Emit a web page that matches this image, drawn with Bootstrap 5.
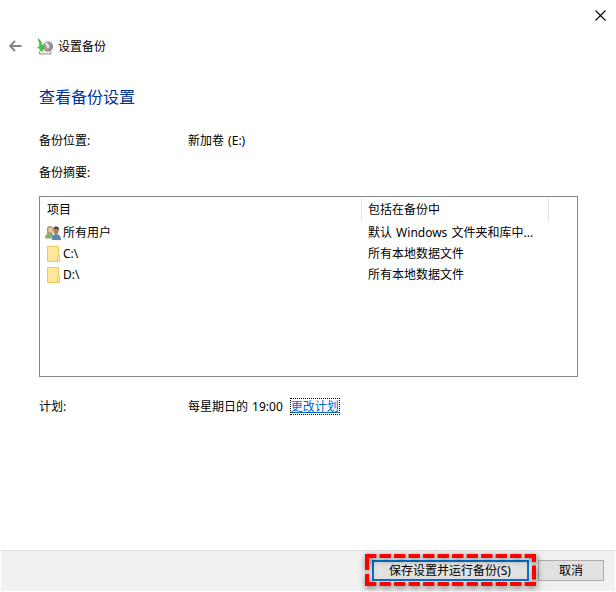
<!DOCTYPE html>
<html lang="zh-CN">
<head>
<meta charset="utf-8">
<title>设置备份</title>
<link href="https://cdn.jsdelivr.net/npm/bootstrap@5.3.0/dist/css/bootstrap.min.css" rel="stylesheet">
<style>
body{width:616px;height:592px;overflow:hidden;background:#fff;color:#000;font:12px/16px "Noto Sans","Noto Sans CJK SC",sans-serif;word-spacing:1px}
.win-top{height:31px;padding:10px 10px 0 0}
.win-head{height:31px;padding-left:9px}
.win-head .back{margin-top:-1px}
.app-icon{margin:-1px 5px 0 15px}
.page{padding:0 38px 0 39px}
.page-title{font-size:16px;line-height:24px;color:#003399;margin:23px 0 0;font-weight:400}
.field-name{width:149px}
.place-row{margin-top:24px}
.summary-label{margin-top:16px}
.summary-box{height:181px;border:1px solid #828790;margin-top:15px;padding-top:1px}
.cols{height:24px}
.c1{width:322px;padding-left:7px}
.c2{width:187px;padding-left:6px}
.hd{border-right:1px solid #e5e5e5;padding-bottom:1px}
.line{height:21px}
.c1.item{padding-left:5px}
.c1.item svg{margin-right:2px}
.plan-row{margin-top:22px}
.plan-link{color:#0066cc;outline:1px dotted #000;text-decoration:underline;margin-left:8px;line-height:15px;height:15px}
.foot{height:41px;margin:0 1px;background:#f0f0f0;border-top:1px solid #dfdfdf;padding:9px 11px 0 0}
.foot .btn{--bs-btn-font-size:12px;--bs-btn-line-height:17px;--bs-btn-padding-x:0;--bs-btn-padding-y:0;--bs-btn-bg:#e1e1e1;--bs-btn-color:#000;--bs-btn-border-color:#adadad;height:21px;width:66px}
.foot .save{border:2px solid #0078d7;width:157px;margin-right:9px;padding-right:1px}
.ring{left:-11px;top:-10px;overflow:visible;pointer-events:none;filter:drop-shadow(1px 2px 3px rgba(0,0,0,.6))}
</style>
<script src="https://cdn.jsdelivr.net/npm/bootstrap@5.3.0/dist/js/bootstrap.bundle.min.js"></script>
</head>
<body class="d-flex flex-column">
<div class="win-top d-flex justify-content-end"><svg width="11" height="11" viewBox="0 0 11 11"><path d="M.5.5l10 10M10.500.5l-10 10" stroke="#000" stroke-width="1.100"/></svg></div>
<header class="win-head d-flex align-items-center">
<svg class="back" width="13" height="12" viewBox="0 0 13 12" fill="none" stroke="#858585" stroke-width="1.800"><path d="M12.500 6H1M6 1L1 6l5 5"/></svg>
<svg class="app-icon" width="16" height="17" viewBox="0 0 16 17"><path d="M2.500 14l2-3.500h8l1.500 3V16H2.500z" fill="#ddd" stroke="#888" stroke-width=".8"/><path d="M3 14h10.500" stroke="#fff"/><circle cx="11" cy="8.500" r="4.600" fill="#a5a5ab" stroke="#666" stroke-width=".8"/><path d="M11 8.500L7.500 6a4.500 4.500 0 013-1.800z" fill="#e8e8e8"/><path d="M11 8.500l4-2a4 4 0 01-1 5z" fill="#7f8fb8"/><path d="M11 8.500l-4 1.500 2 2.500z" fill="#cf9080"/><path d="M11 8.500l1 4 2-1z" fill="#c77"/><circle cx="11" cy="8.500" r="1.300" fill="#fff"/><path d="M1 1q3.500 1 4 7l2-1.500-2 7-4.500-4.500 2 .2Q3 4 1 1z" fill="#35d32c" stroke="#22ad20" stroke-width=".5"/></svg>
<span>设置备份</span>
</header>
<main class="page flex-grow-1">
<h1 class="page-title">查看备份设置</h1>
<div class="d-flex place-row"><span class="field-name">备份位置:</span><span>新加卷 (E:)</span></div>
<div class="summary-label">备份摘要:</div>
<div class="summary-box">
<div class="d-flex cols"><div class="c1 hd d-flex align-items-center">项目</div><div class="c2 hd d-flex align-items-center">包括在备份中</div></div>
<div class="d-flex line"><div class="c1 item d-flex align-items-center"><svg width="16" height="16" viewBox="0 0 16 16"><path d="M0 13.500q0-5 4-5.500l4 1v4.500z" fill="#8caa78"/><path d="M2 8V4q0-3 3-3 3 0 3 4l-1 4H4z" fill="#a39868"/><ellipse cx="5.300" cy="5" rx="1.900" ry="2.800" fill="#edc9a0"/><path d="M7 15q0-6 4-6 5 0 5 6z" fill="#5989b5"/><ellipse cx="11" cy="6" rx="2.600" ry="3.300" fill="#b77c50"/><path d="M8 5q0-4 3.500-3.500 3 .3 2.500 4.500l-1-2-4-.500z" fill="#463c38"/></svg>所有用户</div><div class="c2 d-flex align-items-center text-nowrap">默认 Windows 文件夹和库中...</div></div>
<div class="d-flex line"><div class="c1 item d-flex align-items-center"><svg width="16" height="16" viewBox="0 0 16 16"><path d="M2.500.5h11V9.500h1v6h-12z" fill="#ffe79b" stroke="#edc95c"/><path d="M12.500 10v5" stroke="#edc95c"/></svg>C:\</div><div class="c2 d-flex align-items-center">所有本地数据文件</div></div>
<div class="d-flex line"><div class="c1 item d-flex align-items-center"><svg width="16" height="16" viewBox="0 0 16 16"><path d="M2.500.5h11V9.500h1v6h-12z" fill="#ffe79b" stroke="#edc95c"/><path d="M12.500 10v5" stroke="#edc95c"/></svg>D:\</div><div class="c2 d-flex align-items-center">所有本地数据文件</div></div>
</div>
<div class="d-flex plan-row"><span class="field-name">计划:</span><span>每星期日的 19:00</span><a class="plan-link" href="#">更改计划</a></div>
</main>
<footer class="foot d-flex justify-content-end align-items-start">
<button class="btn save rounded-0 position-relative">保存设置并运行备份(S)
<svg class="ring position-absolute" width="177" height="38" viewBox="0 0 177 38" fill="none" stroke="#f00" stroke-width="4"><path d="M2 4h171M2 32h171" stroke-dasharray="11.400 3.110"/><path d="M4 2v16M4 22v12M171 2v8M171 13.500v14M171 30v4"/></svg></button>
<button class="btn rounded-0">取消</button>
</footer>
<div style="height:1px"></div>
</body>
</html>
